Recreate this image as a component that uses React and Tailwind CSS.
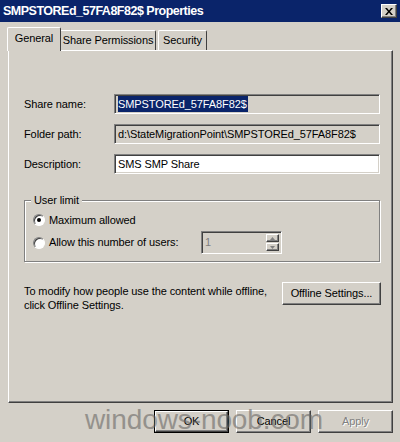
import React from "react";

const raised =
  "border border-t-white border-l-white border-r-[#404040] border-b-[#404040] shadow-[inset_-1px_-1px_0_#808080]";
const sunken =
  "border border-t-[#808080] border-l-[#808080] border-r-white border-b-white shadow-[inset_1px_1px_0_#404040,inset_-1px_-1px_0_#d4d0c8]";

function Radio({ checked }) {
  return (
    <span className="relative inline-block w-[12px] h-[12px] rounded-full border border-t-[#808080] border-l-[#808080] border-r-white border-b-white bg-white shadow-[inset_1px_1px_0_#404040]">
      {checked && (
        <span className="absolute left-[3px] top-[3px] w-[4px] h-[4px] rounded-full bg-black" />
      )}
    </span>
  );
}

function Field({ label, children, white }) {
  return (
    <div className="flex items-center">
      <div className="w-[90px]">{label}</div>
      <div
        className={`w-[266px] h-[20px] flex items-center pl-[3px] ${sunken} ${
          white ? "bg-white" : "bg-[#d4d0c8]"
        }`}
      >
        {children}
      </div>
    </div>
  );
}

export default function App() {
  return (
    <div
      className="relative w-[400px] h-[442px] bg-[#d4d0c8] overflow-hidden text-[11px] tracking-[-0.1px] text-black whitespace-nowrap"
      style={{ fontFamily: '"Liberation Sans", Arial, sans-serif' }}
    >
      {/* Title bar */}
      <div className="h-[22px] bg-[#0a246a] flex items-center justify-between pl-[3px] pr-[3px]">
        <span className="text-white font-bold text-[12.5px] tracking-[-0.5px]">
          SMPSTOREd_57FA8F82$ Properties
        </span>
        <span
          className={`w-[16px] h-[14px] bg-[#d4d0c8] flex items-center justify-center ${raised}`}
        >
          <svg width="8" height="7" viewBox="0 0 8 7">
            <path d="M0 0h2l2 2.5L6 0h2L5 3.5 8 7H6L4 4.5 2 7H0l3-3.5z" fill="black" />
          </svg>
        </span>
      </div>

      {/* Tabs */}
      <div className="flex items-end pl-[7px] mt-[5px] h-[23px]">
        <div className="relative z-10 h-[24px] w-[54px] flex items-center justify-center bg-[#d4d0c8] border-t border-l border-t-white border-l-white border-r border-r-[#404040] rounded-t-[2px] -mb-[1px] pb-[2px]">
          General
        </div>
        <div className="h-[20px] w-[95px] flex items-center justify-center border-t border-t-white border-r border-r-[#404040] rounded-tr-[2px]">
          Share Permissions
        </div>
        <div className="ml-[2px] h-[20px] w-[49px] flex items-center justify-center border-t border-l border-t-white border-l-white border-r border-r-[#404040] rounded-t-[2px]">
          Security
        </div>
      </div>

      {/* Panel */}
      <div className="ml-[8px] w-[385px] h-[353px] border border-t-white border-l-white border-r-[#404040] border-b-[#404040] shadow-[inset_-1px_-1px_0_#808080] pl-[15px] pt-[43px]">
        <div className="flex flex-col gap-[10px]">
          <Field label="Share name:">
            <span className="bg-[#0a246a] text-white pr-[1px]">SMPSTOREd_57FA8F82$</span>
          </Field>
          <Field label="Folder path:">
            <span>d:\StateMigrationPoint\SMPSTOREd_57FA8F82$</span>
          </Field>
          <Field label="Description:" white>
            <span>SMS SMP Share</span>
          </Field>
        </div>

        {/* Group box */}
        <div className="relative mt-[26px] w-[356px] h-[62px] border border-[#808080] shadow-[1px_1px_0_white,inset_1px_1px_0_white] pl-[8px] pt-[11px]">
          <span className="absolute -top-[8px] left-[6px] bg-[#d4d0c8] px-[3px] leading-[14px]">
            User limit
          </span>
          <div className="flex items-center gap-[4px] h-[16px]">
            <Radio checked />
            <span>Maximum allowed</span>
          </div>
          <div className="flex items-center mt-[3px] h-[23px]">
            <div className="flex items-center gap-[4px] w-[168px]">
              <Radio />
              <span>Allow this number of users:</span>
            </div>
            <div className={`w-[81px] h-[23px] flex items-center justify-between pl-[3px] pr-[2px] ${sunken}`}>
              <span className="text-[#808080]">1</span>
              <div className="flex flex-col gap-[1px]">
                <span className={`w-[13px] h-[8px] flex items-center justify-center ${raised}`}>
                  <svg width="5" height="3" viewBox="0 0 5 3"><path d="M2.5 0L5 3H0z" fill="#808080" /></svg>
                </span>
                <span className={`w-[13px] h-[8px] flex items-center justify-center ${raised}`}>
                  <svg width="5" height="3" viewBox="0 0 5 3"><path d="M0 0h5L2.5 3z" fill="#808080" /></svg>
                </span>
              </div>
            </div>
          </div>
        </div>

        {/* Offline */}
        <div className="flex items-start mt-[20px] w-[357px] justify-between">
          <div className="leading-[14px] pt-[2px]">
            To modify how people use the content while offline,
            <br />
            click Offline Settings.
          </div>
          <div className={`w-[99px] h-[23px] flex items-center justify-center ${raised}`}>
            Offline Settings...
          </div>
        </div>
      </div>

      {/* Bottom buttons */}
      <div className="flex justify-end gap-[7px] pr-[7px] mt-[7px]">
        <div className="w-[75px] h-[23px] border border-black flex">
          <div className={`flex-1 flex items-center justify-center ${raised}`}>OK</div>
        </div>
        <div className={`w-[75px] h-[23px] flex items-center justify-center ${raised}`}>Cancel</div>
        <div className={`w-[75px] h-[23px] flex items-center justify-center text-[#808080] [text-shadow:1px_1px_0_white] ${raised}`}>
          Apply
        </div>
      </div>

      {/* Watermark */}
      <div
        className="absolute left-[85px] top-[406px] text-[28px] leading-none text-[#6a6865] opacity-60 pointer-events-none whitespace-nowrap"
        style={{ fontFamily: '"Liberation Sans", Arial, sans-serif' }}
      >
        windows-noob.com
      </div>
    </div>
  );
}
